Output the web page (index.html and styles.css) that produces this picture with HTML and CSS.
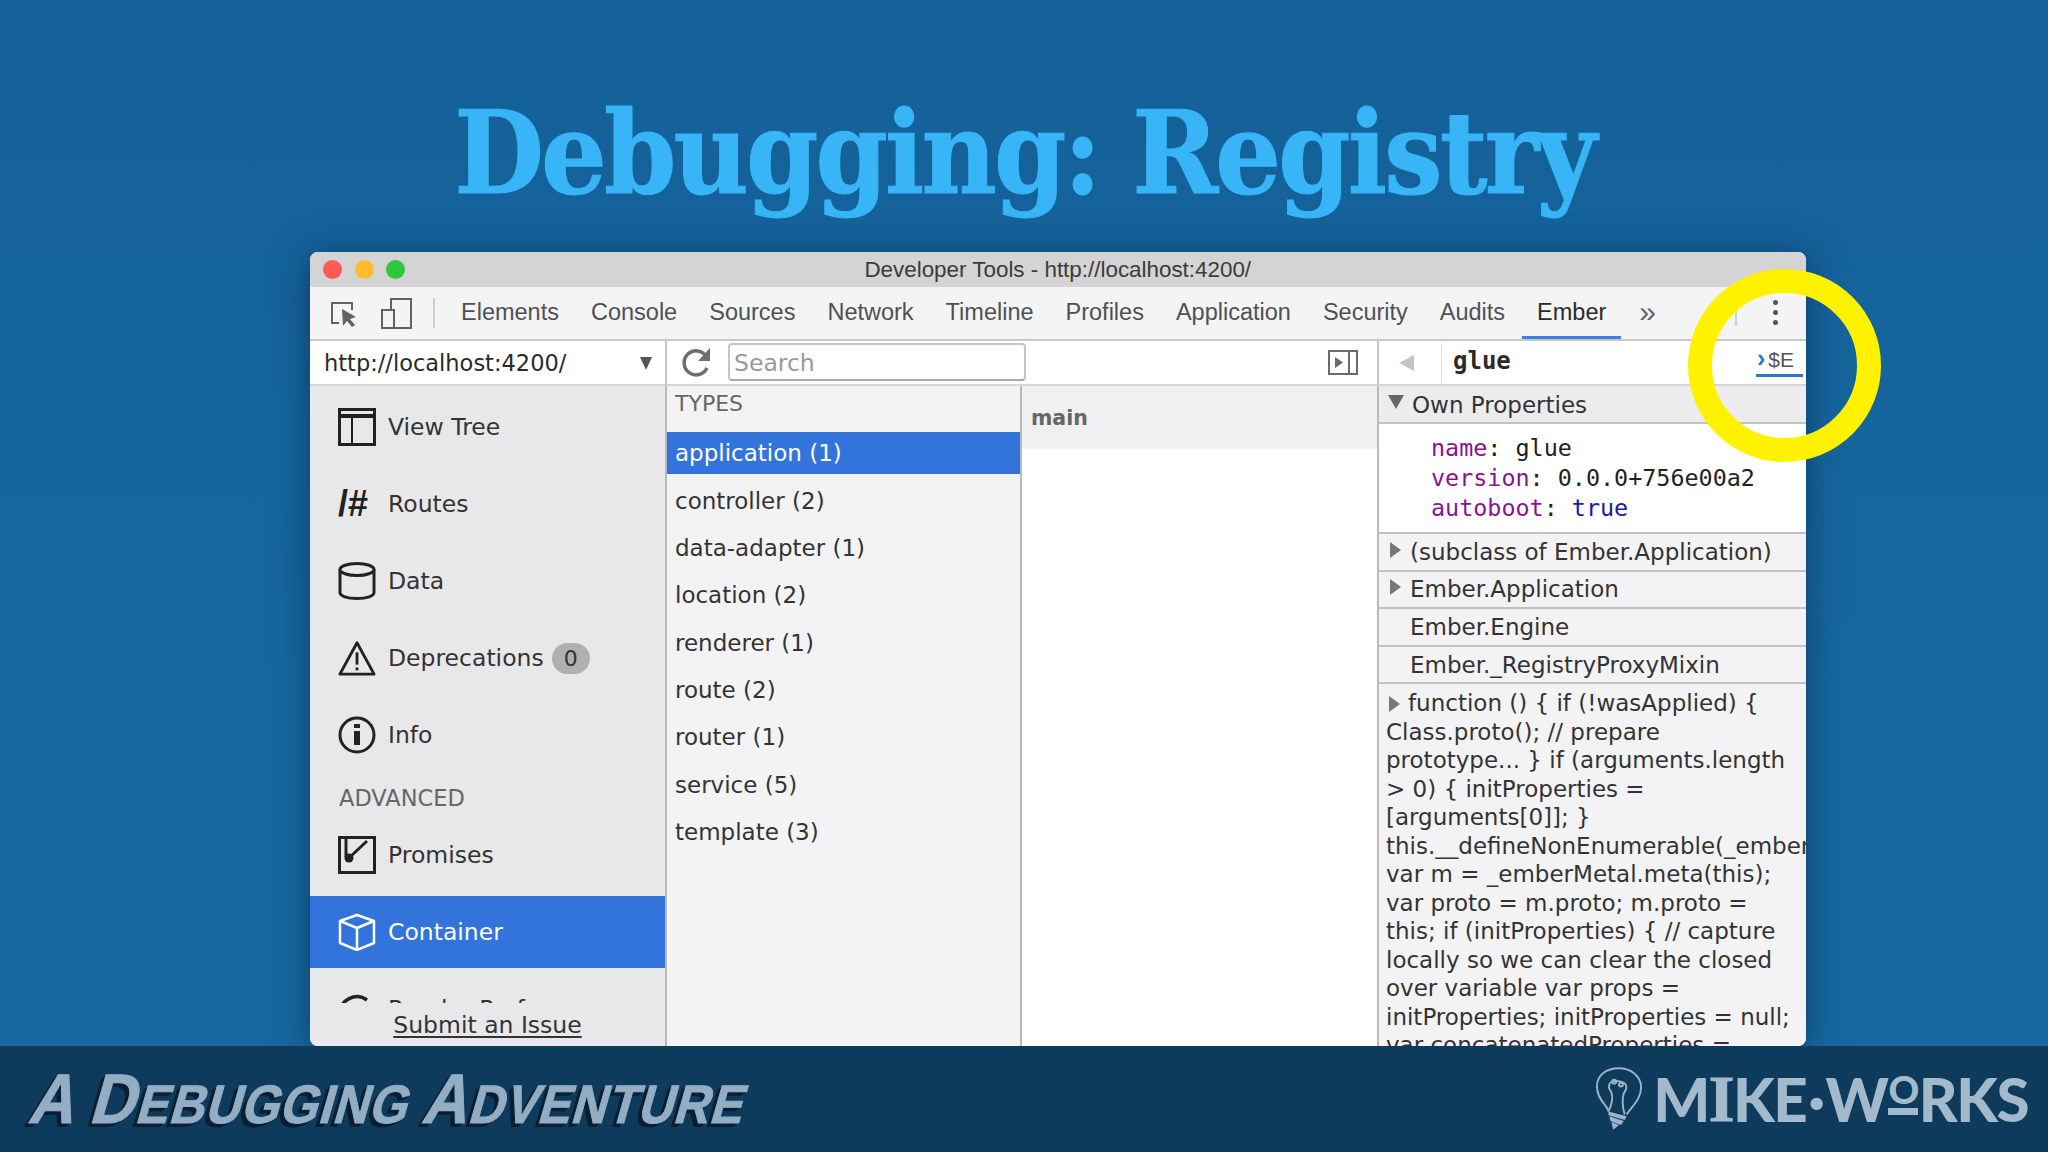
FILE: index.html
```html
<!DOCTYPE html>
<html>
<head>
    <title>Debugging: Registry</title>
    <link rel="stylesheet" href="styles.css">
</head>
<body>
    <div class="slide">
        <div class="slide-head">
            <h1 class="slide-title">Debugging: Registry</h1>
        </div>

        <div class="window">
            <div class="titlebar">
                <span class="light red"></span>
                <span class="light yellow"></span>
                <span class="light green"></span>
                <span class="titlebar-text">Developer Tools - http://localhost:4200/</span>
            </div>

            <div class="tabs">
                <svg class="tool-icon" width="30" height="30" viewBox="0 0 30 30" fill="none" stroke="#5f6368" stroke-width="2">
                    <path d="M10 25H3V5h20v7"/>
                    <path d="M13 11l14 8-6 2 5 6-3 2-5-6-4 5z" fill="#5f6368" stroke="none"/>
                </svg>
                <svg class="tool-icon" width="32" height="32" viewBox="0 0 32 32" fill="none" stroke="#5f6368" stroke-width="2">
                    <path d="M11 12V2h20v29H14"/>
                    <rect x="2" y="13" width="12" height="18"/>
                </svg>
                <span class="tab-sep"></span>
                <span class="tab">Elements</span>
                <span class="tab">Console</span>
                <span class="tab">Sources</span>
                <span class="tab">Network</span>
                <span class="tab">Timeline</span>
                <span class="tab">Profiles</span>
                <span class="tab">Application</span>
                <span class="tab">Security</span>
                <span class="tab">Audits</span>
                <span class="tab active">Ember</span>
                <span class="tab-more">»</span>
                <span class="tab-sep end"></span>
                <span class="kebab"><i></i><i></i><i></i></span>
            </div>

            <div class="panes">
                <div class="url-bar">
                    <span>http://localhost:4200/</span>
                    <span class="url-arrow"></span>
                </div>

                <div class="search-bar">
                    <svg width="32" height="32" viewBox="0 0 32 32" fill="none">
                        <path d="M26 21a12 12 0 1 1-1-12" stroke="#6e6e6e" stroke-width="3.500"/>
                        <path d="M29 1v13H17z" fill="#6e6e6e"/>
                    </svg>
                    <input class="search" type="text" placeholder="Search">
                    <svg class="toggle" width="30" height="25" viewBox="0 0 30 25" fill="none" stroke="#6b6b6b" stroke-width="2">
                        <rect x="1" y="1" width="28" height="23"/>
                        <path d="M21 1v23"/>
                        <path d="M7 7l8 5.500-8 5.500z" fill="#6b6b6b" stroke="none"/>
                    </svg>
                </div>

                <div class="detail-bar">
                    <span class="back"></span>
                    <span class="detail-sep"></span>
                    <b class="detail-name">glue</b>
                    <span class="to-console"><em>›</em>$E</span>
                </div>

                <div class="sidebar">
                    <div class="nav">
                        <div class="nav-item">
                            <svg width="38" height="38" viewBox="0 0 38 38" fill="none" stroke="currentColor" stroke-width="3">
                                <rect x="1.500" y="1.500" width="35" height="35"/>
                                <path d="M1.500 8h35" stroke-width="4"/>
                                <path d="M14 8v28" stroke-width="2"/>
                            </svg>
                            View Tree
                        </div>
                        <div class="nav-item">
                            <span class="routes-icon">/#</span>
                            Routes
                        </div>
                        <div class="nav-item">
                            <svg width="38" height="38" viewBox="0 0 38 38" fill="none" stroke="currentColor" stroke-width="3">
                                <ellipse cx="19" cy="7.500" rx="17" ry="6"/>
                                <path d="M2 7.500v23c0 3.500 7 6 17 6s17-2.500 17-6v-23"/>
                            </svg>
                            Data
                        </div>
                        <div class="nav-item">
                            <svg width="38" height="38" viewBox="0 0 40 38" fill="none" stroke="currentColor" stroke-width="3">
                                <path d="M20 3L2 36h36z" stroke-linejoin="round"/>
                                <path d="M20 13v13" stroke-width="3"/>
                                <path d="M20 29v3" stroke-width="3"/>
                            </svg>
                            Deprecations
                            <span class="badge">0</span>
                        </div>
                        <div class="nav-item">
                            <svg width="38" height="38" viewBox="0 0 38 38" fill="none" stroke="currentColor" stroke-width="3">
                                <circle cx="19" cy="19" r="17"/>
                                <path d="M19 15v14" stroke-width="6"/>
                                <path d="M19 8v4" stroke-width="6"/>
                            </svg>
                            Info
                        </div>
                        <div class="nav-heading">ADVANCED</div>
                        <div class="nav-item">
                            <svg width="38" height="38" viewBox="0 0 38 38" fill="none" stroke="currentColor" stroke-width="3">
                                <rect x="1.500" y="1.500" width="35" height="35"/>
                                <path d="M8 2v19M12 21L29 5" stroke-width="3"/>
                                <circle cx="11" cy="22" r="4.500" fill="currentColor" stroke="none"/>
                            </svg>
                            Promises
                        </div>
                        <div class="nav-item active">
                            <svg width="38" height="38" viewBox="0 0 38 38" fill="none" stroke="currentColor" stroke-width="2.500" stroke-linejoin="round">
                                <path d="M19 2l17 6v22l-17 7-17-7V8z"/>
                                <path d="M2 8l17 7 17-7M19 15v22"/>
                            </svg>
                            Container
                        </div>
                        <div class="nav-item">
                            <svg width="38" height="38" viewBox="0 0 38 38" fill="none" stroke="currentColor" stroke-width="2.500">
                                <path d="M2 24a17 17 0 0 1 27-14" stroke-width="3.500"/>
                                <path d="M33 13l2 3-4 2z" fill="currentColor" stroke="none"/>
                            </svg>
                            Render Performance
                        </div>
                    </div>
                    <div class="sidebar-foot"><a class="issue-link">Submit an Issue</a></div>
                </div>

                <div class="types">
                    <div class="types-head">TYPES</div>
                    <div class="type-row active">application (1)</div>
                    <div class="type-row">controller (2)</div>
                    <div class="type-row">data-adapter (1)</div>
                    <div class="type-row">location (2)</div>
                    <div class="type-row">renderer (1)</div>
                    <div class="type-row">route (2)</div>
                    <div class="type-row">router (1)</div>
                    <div class="type-row">service (5)</div>
                    <div class="type-row">template (3)</div>
                </div>

                <div class="instances">
                    <div class="instance-row">main</div>
                </div>

                <div class="detail">
                    <div class="mixin-head own"><span class="arrow down"></span>Own Properties</div>
                    <div class="props">
                        <div><span class="prop-key">name</span>: glue</div>
                        <div><span class="prop-key">version</span>: 0.0.0+756e00a2</div>
                        <div><span class="prop-key">autoboot</span>: <span class="prop-bool">true</span></div>
                    </div>
                    <div class="mixin-head"><span class="arrow"></span>(subclass of Ember.Application)</div>
                    <div class="mixin-head"><span class="arrow"></span>Ember.Application</div>
                    <div class="mixin-head"><span class="arrow none"></span>Ember.Engine</div>
                    <div class="mixin-head"><span class="arrow none"></span>Ember._RegistryProxyMixin</div>
                    <div class="source">
                        <span class="arrow inline"></span>function () { if (!wasApplied) {<br>
                        Class.proto(); // prepare<br>
                        prototype... } if (arguments.length<br>
                        &gt; 0) { initProperties =<br>
                        [arguments[0]]; }<br>
                        this.__defineNonEnumerable(_ember<br>
                        var m = _emberMetal.meta(this);<br>
                        var proto = m.proto; m.proto =<br>
                        this; if (initProperties) { // capture<br>
                        locally so we can clear the closed<br>
                        over variable var props =<br>
                        initProperties; initProperties = null;<br>
                        var concatenatedProperties =
                    </div>
                </div>
            </div>
        </div>

        <div class="footer">
            <div class="course-name"><span class="big">A</span> <span class="big">D</span>EBUGGING <span class="big">A</span>DVENTURE</div>
            <div class="brand">
                <svg width="48" height="68" viewBox="0 0 50 68" fill="none" stroke="#9db4c8" stroke-width="2">
                    <path d="M14 47C13 40 2 35 2 21 2 9 12 2 25 2c12 0 23 8 23 20 0 12-9 19-15 28"/>
                    <path d="M14 47c4-8 5-14 3-20-2-3-4-6-1-10 3-3 13-2 16 2 2 4 0 6-2 9-2 7-2 13 1 22"/>
                    <circle cx="20" cy="16" r="2"/>
                    <circle cx="27" cy="19" r="2"/>
                    <path d="M14 47l19 5-2 4-17-5zM15 52l15 5-3 4-11-4zM17 58l8 3-6 5z" fill="#9db4c8" stroke="none"/>
                </svg>
                <div class="brand-name">M<span class="brand-i">I</span>KE<span class="brand-dot">·</span>W<span class="brand-o">O</span>RKS</div>
            </div>
        </div>

        <div class="ring"></div>
    </div>
</body>
</html>
```

FILE: styles.css
```css
body { margin: 0; }
.slide { position: relative; width: 2048px; height: 1152px; overflow: hidden; display: flex; flex-direction: column; background: linear-gradient(#14609a, #17689f 60%, #17689f); font-family: "Liberation Sans", sans-serif; }

.slide-head { height: 252px; flex: none; display: flex; justify-content: center; align-items: center; }
.slide-title { margin: 52px 0 0; color: #38b5f6; font-family: "DejaVu Serif", serif; font-stretch: condensed; font-weight: bold; font-size: 115px; line-height: 1; letter-spacing: -2.800px; -webkit-text-stroke: 1px #38b5f6; }

.window { width: 1496px; height: 794px; margin-left: 310px; flex: none; display: flex; flex-direction: column; overflow: hidden; border-radius: 8px; background: #fff; box-shadow: 0 4px 36px rgba(0, 20, 50, 0.5); }

.titlebar { height: 35px; flex: none; display: flex; align-items: center; gap: 12.500px; padding-left: 13px; background: #d3d4d3; }
.light { width: 19px; height: 19px; border-radius: 50%; }
.red { background: #fc5b57; }
.yellow { background: #fdbc2e; }
.green { background: #2ec840; }
.titlebar-text { flex: 1; text-align: center; margin-left: -108px; font-size: 22.400px; color: #3b3b3b; }

.tabs { height: 52px; flex: none; display: flex; align-items: center; padding-left: 19px; background: #f4f4f4; border-bottom: 2px solid #c8c8c8; }
.tool-icon { margin-right: 21px; }
.tab-sep { width: 2px; height: 30px; margin: 0 26px 0 0; background: #cfcfcf; }
.tab { margin-right: 32px; margin-top: -2px; font-size: 23.500px; color: #4d5156; line-height: 52px; }
.tab.active { position: relative; color: #2b2b2b; }
.tab.active::after { content: ""; position: absolute; left: -15px; right: -15px; bottom: -1px; height: 3px; background: #3b7fe0; }
.tab-more { margin-left: 1px; margin-top: -3px; font-size: 30px; color: #5f6368; line-height: 46px; }
.tab-sep.end { margin: 0 0 0 auto; height: 26px; }
.kebab { display: flex; flex-direction: column; gap: 5px; margin: -2px 28px 0 36px; }
.kebab i { width: 5px; height: 5px; border-radius: 50%; background: #555; }

.panes { flex: 1; min-height: 0; display: grid; grid-template-columns: 357px 355px 355px 1fr; grid-template-rows: 45px 1fr; }
.url-bar { display: flex; align-items: center; justify-content: space-between; padding: 0 13px 0 14px; font: 22.500px "DejaVu Sans", sans-serif; color: #2a2a2a; border-bottom: 2px solid #d6d6d6; border-right: 2px solid #c4c4c4; }
.url-arrow { width: 0; height: 0; margin-top: 2px; border-left: 6px solid transparent; border-right: 6px solid transparent; border-top: 13px solid #555; }

.search-bar { grid-column: 2 / 4; display: flex; align-items: center; gap: 15px; padding-left: 14px; border-bottom: 2px solid #d6d6d6; }
.search { width: 298px; height: 38px; box-sizing: border-box; margin: -2px 0 0; padding: 2px 4px 0; border: 2px solid #c4c4c4; border-bottom-color: #aaa; border-radius: 4px; font: 23.500px "DejaVu Sans", sans-serif; }
.search::placeholder { color: #9a9a9a; }
.toggle { margin-left: auto; margin-right: 19px; }

.detail-bar { display: flex; align-items: center; position: relative; border-left: 2px solid #c4c4c4; border-bottom: 2px solid #d6d6d6; }
.back { width: 0; height: 0; margin-left: 20px; border-top: 8px solid transparent; border-bottom: 8px solid transparent; border-right: 15px solid #c4c4c4; }
.detail-sep { width: 1px; height: 40px; margin: 0 11px 0 27px; background: #ddd; }
.detail-name { margin-top: -3px; font: bold 24px "DejaVu Sans Mono", monospace; color: #2a2a2a; }
.to-console { margin-left: auto; margin-right: 3px; width: 47px; box-sizing: border-box; padding: 0 0 2px 1px; border-bottom: 3px solid #2f76c4; font-size: 21px; color: #555; white-space: nowrap; }
.to-console em { margin-right: 3px; font-style: normal; font-weight: bold; font-size: 25px; line-height: 20px; color: #2f76c4; }

.sidebar { grid-column: 1; display: flex; flex-direction: column; min-height: 0; background: #e8e8ea; border-right: 2px solid #b9b9b9; }
.nav { flex: 1; min-height: 0; overflow: hidden; display: flex; flex-direction: column; gap: 5px; padding-top: 5px; }
.nav-item { height: 72px; flex: none; display: flex; align-items: center; gap: 12px; padding-left: 28px; font: 23.500px "DejaVu Sans", sans-serif; color: #333; }
.nav-item svg { flex: none; color: #222; }
.nav-item.active { background: #3273dc; color: #fff; }
.nav-item.active svg { color: #fff; }
.routes-icon { width: 38px; flex: none; font: bold 36px "Liberation Sans", sans-serif; color: #222; white-space: nowrap; }
.badge { width: 38px; height: 31px; margin-left: -4px; border-radius: 16px; display: flex; align-items: center; justify-content: center; background: #b0b0b0; font-size: 22px; color: #333; }
.nav-heading { height: 29px; flex: none; padding: 9px 0 0 29px; font: 22.500px "DejaVu Sans", sans-serif; color: #666; }
.sidebar-foot { height: 43px; flex: none; display: flex; align-items: center; justify-content: center; font: 23.500px "DejaVu Sans", sans-serif; color: #333; }
.issue-link { text-decoration: underline; text-underline-offset: 3px; }

.types { grid-column: 2; display: flex; flex-direction: column; gap: 5.350px; background: #f3f3f5; border-right: 2px solid #b9b9b9; font: 23px "DejaVu Sans", sans-serif; color: #333; }
.types-head { height: 41px; flex: none; padding: 5px 0 0 8px; box-sizing: border-box; color: #666; font-size: 22px; }
.type-row { height: 42px; flex: none; display: flex; align-items: center; padding-left: 8px; }
.type-row.active { background: #3273dc; color: #fff; }

.instances { grid-column: 3; background: #fff; }
.instance-row { height: 63px; padding-left: 9px; display: flex; align-items: center; background: #f0f0f2; font: bold 20.500px "DejaVu Sans", sans-serif; color: #666; }

.detail { grid-column: 4; min-height: 0; overflow: hidden; background: #f3f3f5; border-left: 2px solid #b9b9b9; font: 23px "DejaVu Sans", sans-serif; color: #333; }
.mixin-head { height: 35.600px; display: flex; align-items: center; white-space: nowrap; border-bottom: 2px solid #c2c2c2; background: #f3f3f5; }
.mixin-head.own { padding-top: 2px; height: 34px; background: #ececee; }
.arrow { width: 0; height: 0; margin: -4px 9px 0 11px; border-top: 8px solid transparent; border-bottom: 8px solid transparent; border-left: 11px solid #777; }
.arrow.down { margin: -6px 8px 0 9px; border-left: 8px solid transparent; border-right: 8px solid transparent; border-bottom: 0; border-top: 14px solid #666; }
.arrow.none { border-left-color: transparent; }
.arrow.inline { display: inline-block; margin: 0 8px 0 3px; vertical-align: -1px; }
.props { height: 110px; box-sizing: border-box; padding: 9px 0 0 52px; background: #fff; border-bottom: 2px solid #c2c2c2; font: 23.400px/30px "DejaVu Sans Mono", monospace; color: #222; }
.prop-key { color: #881391; }
.prop-bool { color: #1a1aa6; }
.source { padding: 5px 0 0 7px; font-size: 23px; line-height: 28.500px; white-space: nowrap; }

.footer { height: 106px; flex: none; display: flex; justify-content: space-between; align-items: center; background: #0e3a5c; }
.course-name { margin: 0 0 0 34px; transform: skewX(-16deg) scaleX(0.9); transform-origin: left center; font: bold 54px "Liberation Sans", sans-serif; letter-spacing: 1px; color: #93adc3; -webkit-text-stroke: 1px #93adc3; text-shadow: -2px 2px 0 #0a1f33, -3px 3px 0 #0a1f33, -4px 4px 0 #0a1f33; white-space: nowrap; }
.course-name .big { font-size: 70px; }
.brand { display: flex; align-items: center; gap: 10px; margin-right: 20px; }
.brand-name { display: flex; align-items: center; font: 900 60px Lato, sans-serif; letter-spacing: -1.500px; color: #a3bacd; white-space: nowrap; }
.brand-i { font: bold 66px "Liberation Serif", serif; -webkit-text-stroke: 1px #a3bacd; }
.brand-dot { margin: 0 2px; }
.brand-o { font-size: 38px; line-height: 38px; margin: -14px 1px 0; border-bottom: 7px solid #a3bacd; }

.ring { position: absolute; left: 1688px; top: 269px; width: 193px; height: 193px; box-sizing: border-box; border: 24px solid #fff200; border-radius: 50%; }
```
